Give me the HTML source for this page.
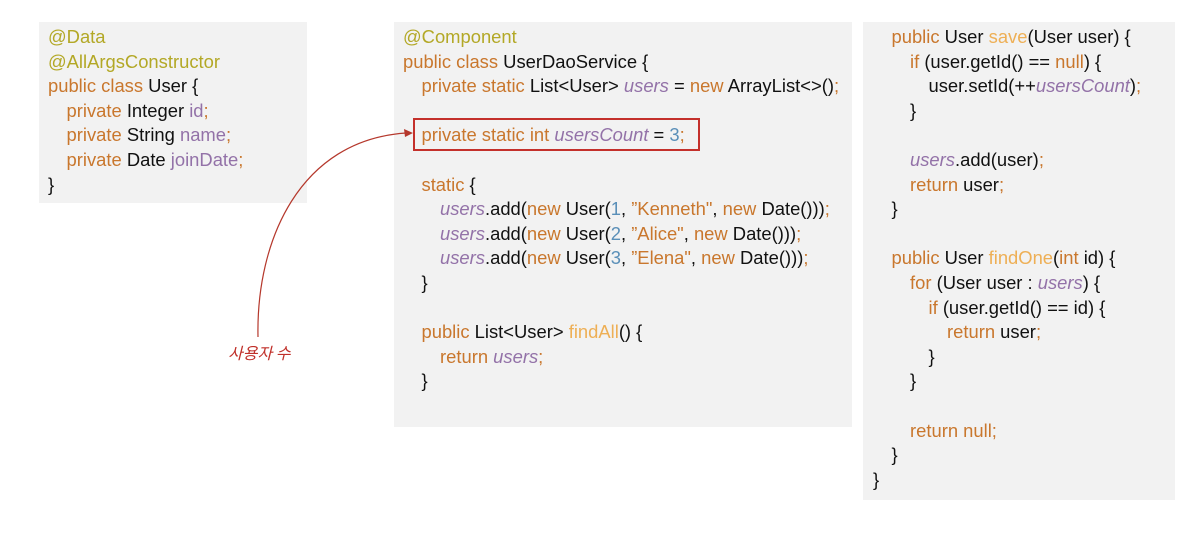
<!DOCTYPE html>
<html><head><meta charset="utf-8"><style>
body{margin:0;width:1194px;height:557px;background:#fff;position:relative;overflow:hidden;font-family:"Liberation Sans","Noto Sans CJK KR",sans-serif;}
.p{position:absolute;background:#f2f2f2;}
.c{position:absolute;font-size:18.4px;line-height:24.6px;color:#111;}
.c div{height:24.6px;white-space:pre}
.k{color:#c9772d}.a{color:#b3a826}.v{color:#9372a8}.vi{color:#9372a8;font-style:italic}.m{color:#eeaf55}.n{color:#5a8fb8}
.i1{padding-left:18.5px}.i2{padding-left:37px}.i3{padding-left:55.5px}
</style></head><body>
<div class="p" style="left:39px;top:22px;width:268px;height:181px"></div>
<div class="p" style="left:394px;top:22px;width:458px;height:405px"></div>
<div class="p" style="left:863px;top:22px;width:312px;height:478px"></div>

<div class="c" style="left:48px;top:25px"><div class="a">@Data</div><div class="a">@AllArgsConstructor</div><div><span class="k">public class</span> User {</div><div class="i1"><span class="k">private</span> Integer <span class="v">id</span><span class="k">;</span></div><div class="i1"><span class="k">private</span> String <span class="v">name</span><span class="k">;</span></div><div class="i1"><span class="k">private</span> Date <span class="v">joinDate</span><span class="k">;</span></div><div>}</div></div>

<div class="c" style="left:403px;top:25px"><div class="a">@Component</div><div><span class="k">public class</span> UserDaoService {</div><div class="i1"><span class="k">private static</span> List&lt;User&gt; <span class="vi">users</span> = <span class="k">new</span> ArrayList&lt;&gt;()<span class="k">;</span></div><div></div><div class="i1"><span class="k">private static int</span> <span class="vi">usersCount</span> = <span class="n">3</span><span class="k">;</span></div><div></div><div class="i1"><span class="k">static</span> {</div><div class="i2"><span class="vi">users</span>.add(<span class="k">new</span> User(<span class="n">1</span>, <span class="k">”Kenneth"</span>, <span class="k">new</span> Date()))<span class="k">;</span></div><div class="i2"><span class="vi">users</span>.add(<span class="k">new</span> User(<span class="n">2</span>, <span class="k">”Alice"</span>, <span class="k">new</span> Date()))<span class="k">;</span></div><div class="i2"><span class="vi">users</span>.add(<span class="k">new</span> User(<span class="n">3</span>, <span class="k">”Elena"</span>, <span class="k">new</span> Date()))<span class="k">;</span></div><div class="i1">}</div><div></div><div class="i1"><span class="k">public</span> List&lt;User&gt; <span class="m">findAll</span>() {</div><div class="i2"><span class="k">return</span> <span class="vi">users</span><span class="k">;</span></div><div class="i1">}</div></div>

<div class="c" style="left:873px;top:25px"><div class="i1"><span class="k">public</span> User <span class="m">save</span>(User user) {</div><div class="i2"><span class="k">if</span> (user.getId() == <span class="k">null</span>) {</div><div class="i3">user.setId(++<span class="vi">usersCount</span>)<span class="k">;</span></div><div class="i2">}</div><div></div><div class="i2"><span class="vi">users</span>.add(user)<span class="k">;</span></div><div class="i2"><span class="k">return</span> user<span class="k">;</span></div><div class="i1">}</div><div></div><div class="i1"><span class="k">public</span> User <span class="m">findOne</span>(<span class="k">int</span> id) {</div><div class="i2"><span class="k">for</span> (User user : <span class="vi">users</span>) {</div><div class="i3"><span class="k">if</span> (user.getId() == id) {</div><div style="padding-left:74px"><span class="k">return</span> user<span class="k">;</span></div><div class="i3">}</div><div class="i2">}</div><div></div><div class="i2"><span class="k">return null</span><span class="k">;</span></div><div class="i1">}</div><div>}</div></div>

<div style="position:absolute;left:413px;top:118px;width:283px;height:29px;border:2px solid #c4302b"></div>
<svg style="position:absolute;left:0;top:0" width="1194" height="557">
<path d="M258,337 C256,240 300,140 406,133" fill="none" stroke="#b5382c" stroke-width="1.2"/>
<polygon points="413,133 404,129 405,137" fill="#b5382c"/>
</svg>
<div style="position:absolute;left:228px;top:340px;font-size:16px;font-style:italic;color:#c0302a;font-family:'Noto Sans CJK KR',sans-serif">사용자 수</div>
</body></html>
